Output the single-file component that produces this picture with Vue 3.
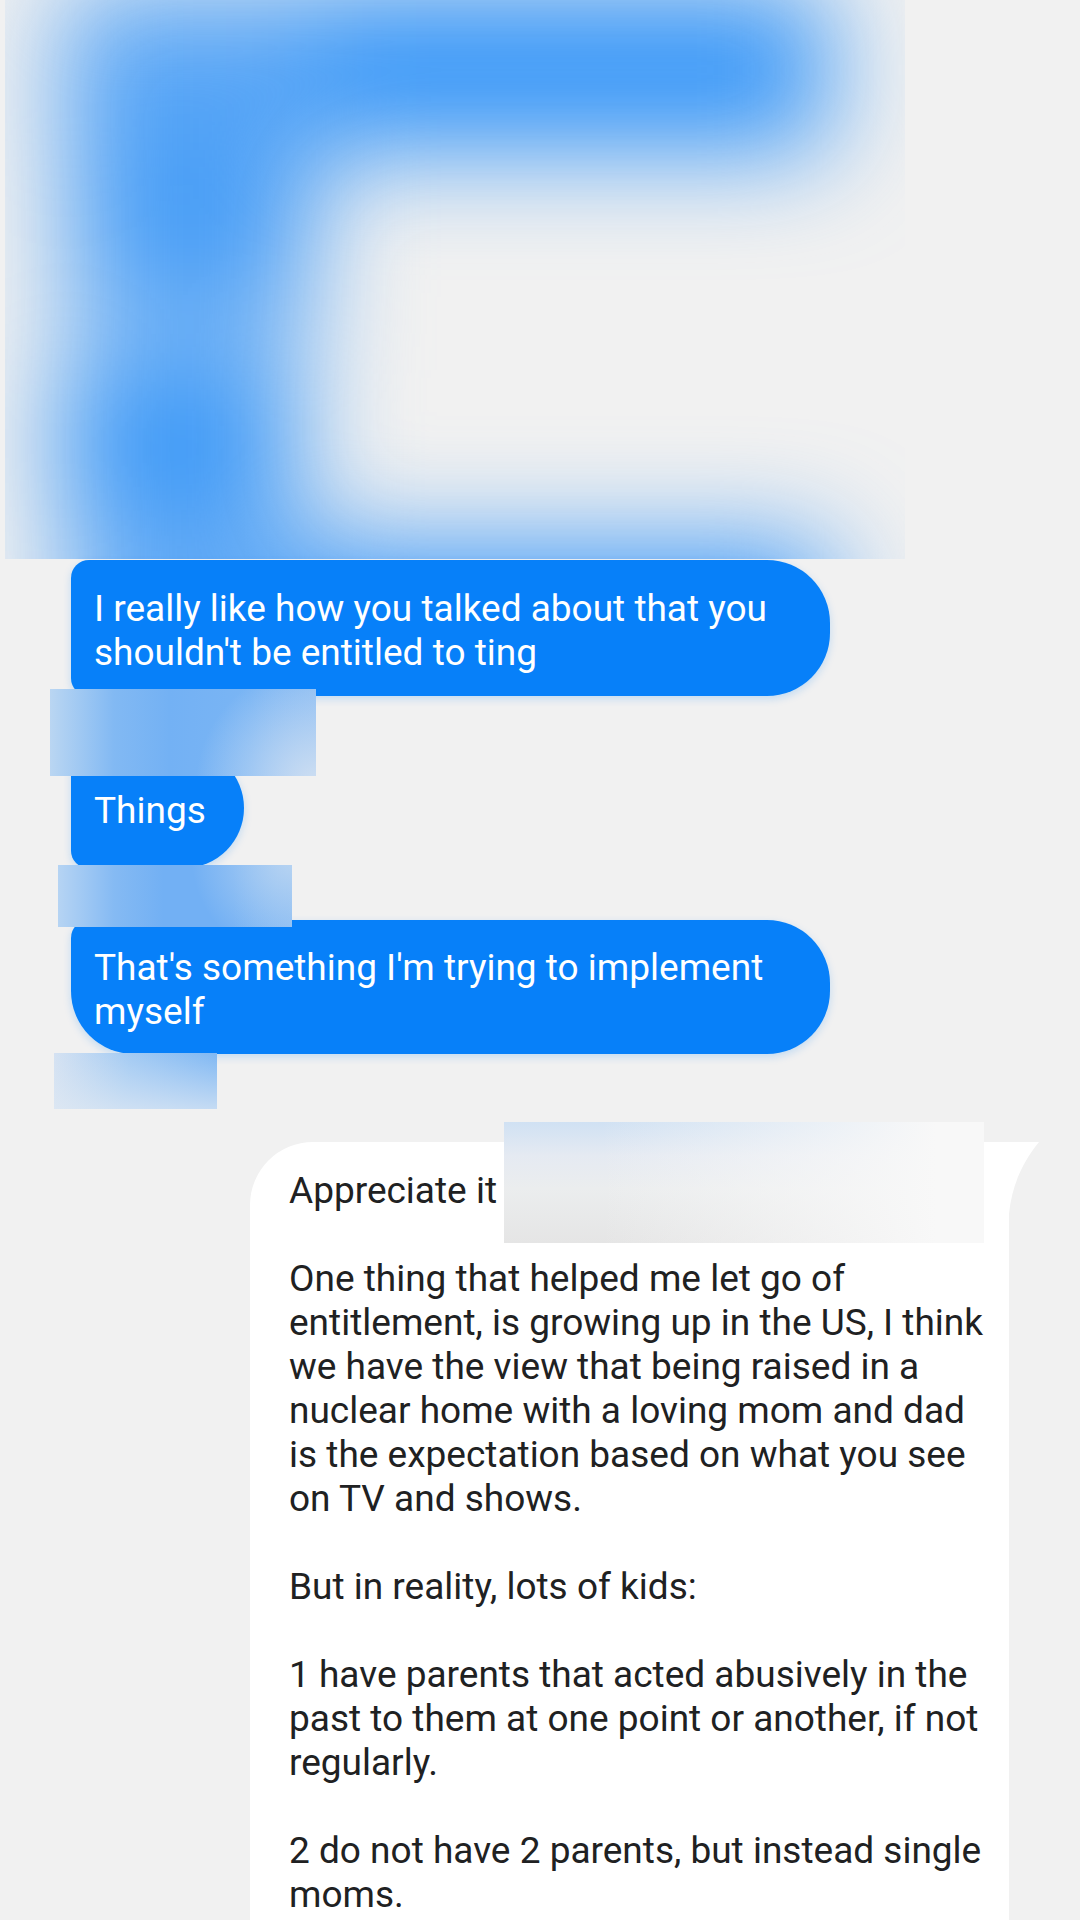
<script setup>
const outgoing = [
  { text: "I really like how you talked about that you shouldn't be entitled to ting", cover: 'cover-a' },
  { text: 'Things', cover: 'cover-b' },
  { text: "That's something I'm trying to implement myself", cover: 'cover-c', last: true },
]

const reply = [
  'Appreciate it',
  'One thing that helped me let go of entitlement, is growing up in the US, I think we have the view that being raised in a nuclear home with a loving mom and dad is the expectation based on what you see on TV and shows.',
  'But in reality, lots of kids:',
  '1 have parents that acted abusively in the past to them at one point or another, if not regularly.',
  '2 do not have 2 parents, but instead single moms.',
]
</script>

<template>
  <main class="thread">
    <div class="redacted" aria-hidden="true">
      <svg class="haze" viewBox="0 0 900 559" preserveAspectRatio="none">
        <defs>
          <filter id="soft" filterUnits="userSpaceOnUse" x="-200" y="-200" width="1300" height="960" color-interpolation-filters="sRGB">
            <feGaussianBlur stdDeviation="54" />
          </filter>
        </defs>
        <g filter="url(#soft)">
          <rect x="58" y="-10" width="258" height="160" fill="#57a5f6" />
          <rect x="316" y="-10" width="506" height="160" fill="#3495f8" />
          <rect x="66" y="150" width="240" height="145" fill="#479df6" />
          <rect x="66" y="295" width="236" height="75" fill="#84bbf4" />
          <rect x="54" y="370" width="236" height="130" fill="#3b98f7" />
          <rect x="62" y="500" width="232" height="200" fill="#62aaf5" />
          <rect x="294" y="546" width="530" height="160" fill="#3a97f8" />
        </g>
      </svg>
    </div>

    <section class="outgoing">
      <div v-for="m in outgoing" :key="m.text" class="message">
        <p class="bubble" :class="{ last: m.last }">{{ m.text }}</p>
        <span class="cover" :class="m.cover" aria-hidden="true"></span>
      </div>
    </section>

    <article class="reply">
      <svg class="tail" viewBox="0 0 30 72" aria-hidden="true">
        <path d="M0 0H30C14 20 3 42 0 72Z" fill="#fff" />
      </svg>
      <p v-for="line in reply" :key="line">{{ line }}</p>
      <span class="cover cover-d" aria-hidden="true"></span>
    </article>
  </main>
</template>

<style>
body {
  margin: 0;
  background: #f1f1f1;
}
</style>

<style scoped>
.thread {
  display: flex;
  flex-direction: column;
  min-height: 100vh;
  box-sizing: border-box;
  font-family: Roboto, "Liberation Sans", sans-serif;
  font-size: 37px;
  line-height: 44px;
  background: #f1f1f1;
}
p {
  margin: 0;
}
.redacted {
  width: calc(100% - 180px);
  height: 559px;
  margin: 0 0 1px 5px;
  overflow: hidden;
  background: #f1f1f1;
}
.haze {
  display: block;
  width: 100%;
  height: 100%;
}
.outgoing {
  display: flex;
  flex-direction: column;
  align-items: flex-start;
  gap: 52px;
  padding: 0 71px;
}
.message {
  position: relative;
  max-width: 759px;
}
.bubble {
  display: flex;
  align-items: center;
  box-sizing: border-box;
  min-height: 120px;
  padding: 27px 38px 21px 23px;
  border-radius: 18px 63px 63px 18px;
  color: #fff;
  background: #0780f9;
  box-shadow: 0 3px 8px rgba(7, 128, 249, 0.2);
}
.bubble.last {
  padding-top: 26px;
  padding-bottom: 20px;
  border-bottom-left-radius: 63px;
}
.cover {
  position: absolute;
}
.cover-a {
  left: -21px;
  top: 129px;
  z-index: 1;
  width: 266px;
  height: 87px;
  background:
    radial-gradient(circle at 100% 110%, #cfdff2, rgba(207, 223, 242, 0) 120px),
    linear-gradient(90deg, #bad6f2, #82b9f3 24%, #73b1f4 45%, #7ab5f4 75%, #8abcf3);
}
.cover-b {
  left: -13px;
  top: 117px;
  z-index: 1;
  width: 234px;
  height: 62px;
  background:
    radial-gradient(circle at 100% -10%, #b8d4f2, rgba(184, 212, 242, 0) 100px),
    linear-gradient(90deg, #b6d4f3, #85baf3 24%, #72b0f4 45%, #72b0f4 75%, #84b9f3);
}
.cover-c {
  left: -17px;
  top: 133px;
  width: 163px;
  height: 56px;
  background:
    linear-gradient(180deg, rgba(226, 234, 243, 0), rgba(226, 234, 243, 0.7)),
    linear-gradient(100deg, #d5e2f2, #a2caf3 45%, #80b8f3 95%);
}
.cover-d {
  left: 254px;
  top: -20px;
  width: 480px;
  height: 121px;
  background:
    linear-gradient(90deg, rgba(248, 248, 248, 0) 20%, #f8f8f8 90%),
    linear-gradient(180deg, #d0e1f3, #e5eaf2 28%, #ebedee 55%, #e5e5e5);
}
.reply {
  position: relative;
  display: flex;
  flex: 1;
  flex-direction: column;
  align-self: flex-end;
  gap: 44px;
  box-sizing: border-box;
  width: 759px;
  max-width: calc(100% - 142px);
  margin: 88px 71px 0;
  padding: 27px 22px 0 39px;
  border-top-left-radius: 63px;
  color: #202122;
  background: #fff;
}
.tail {
  position: absolute;
  left: 100%;
  top: 0;
  width: 30px;
  height: 72px;
}
</style>
